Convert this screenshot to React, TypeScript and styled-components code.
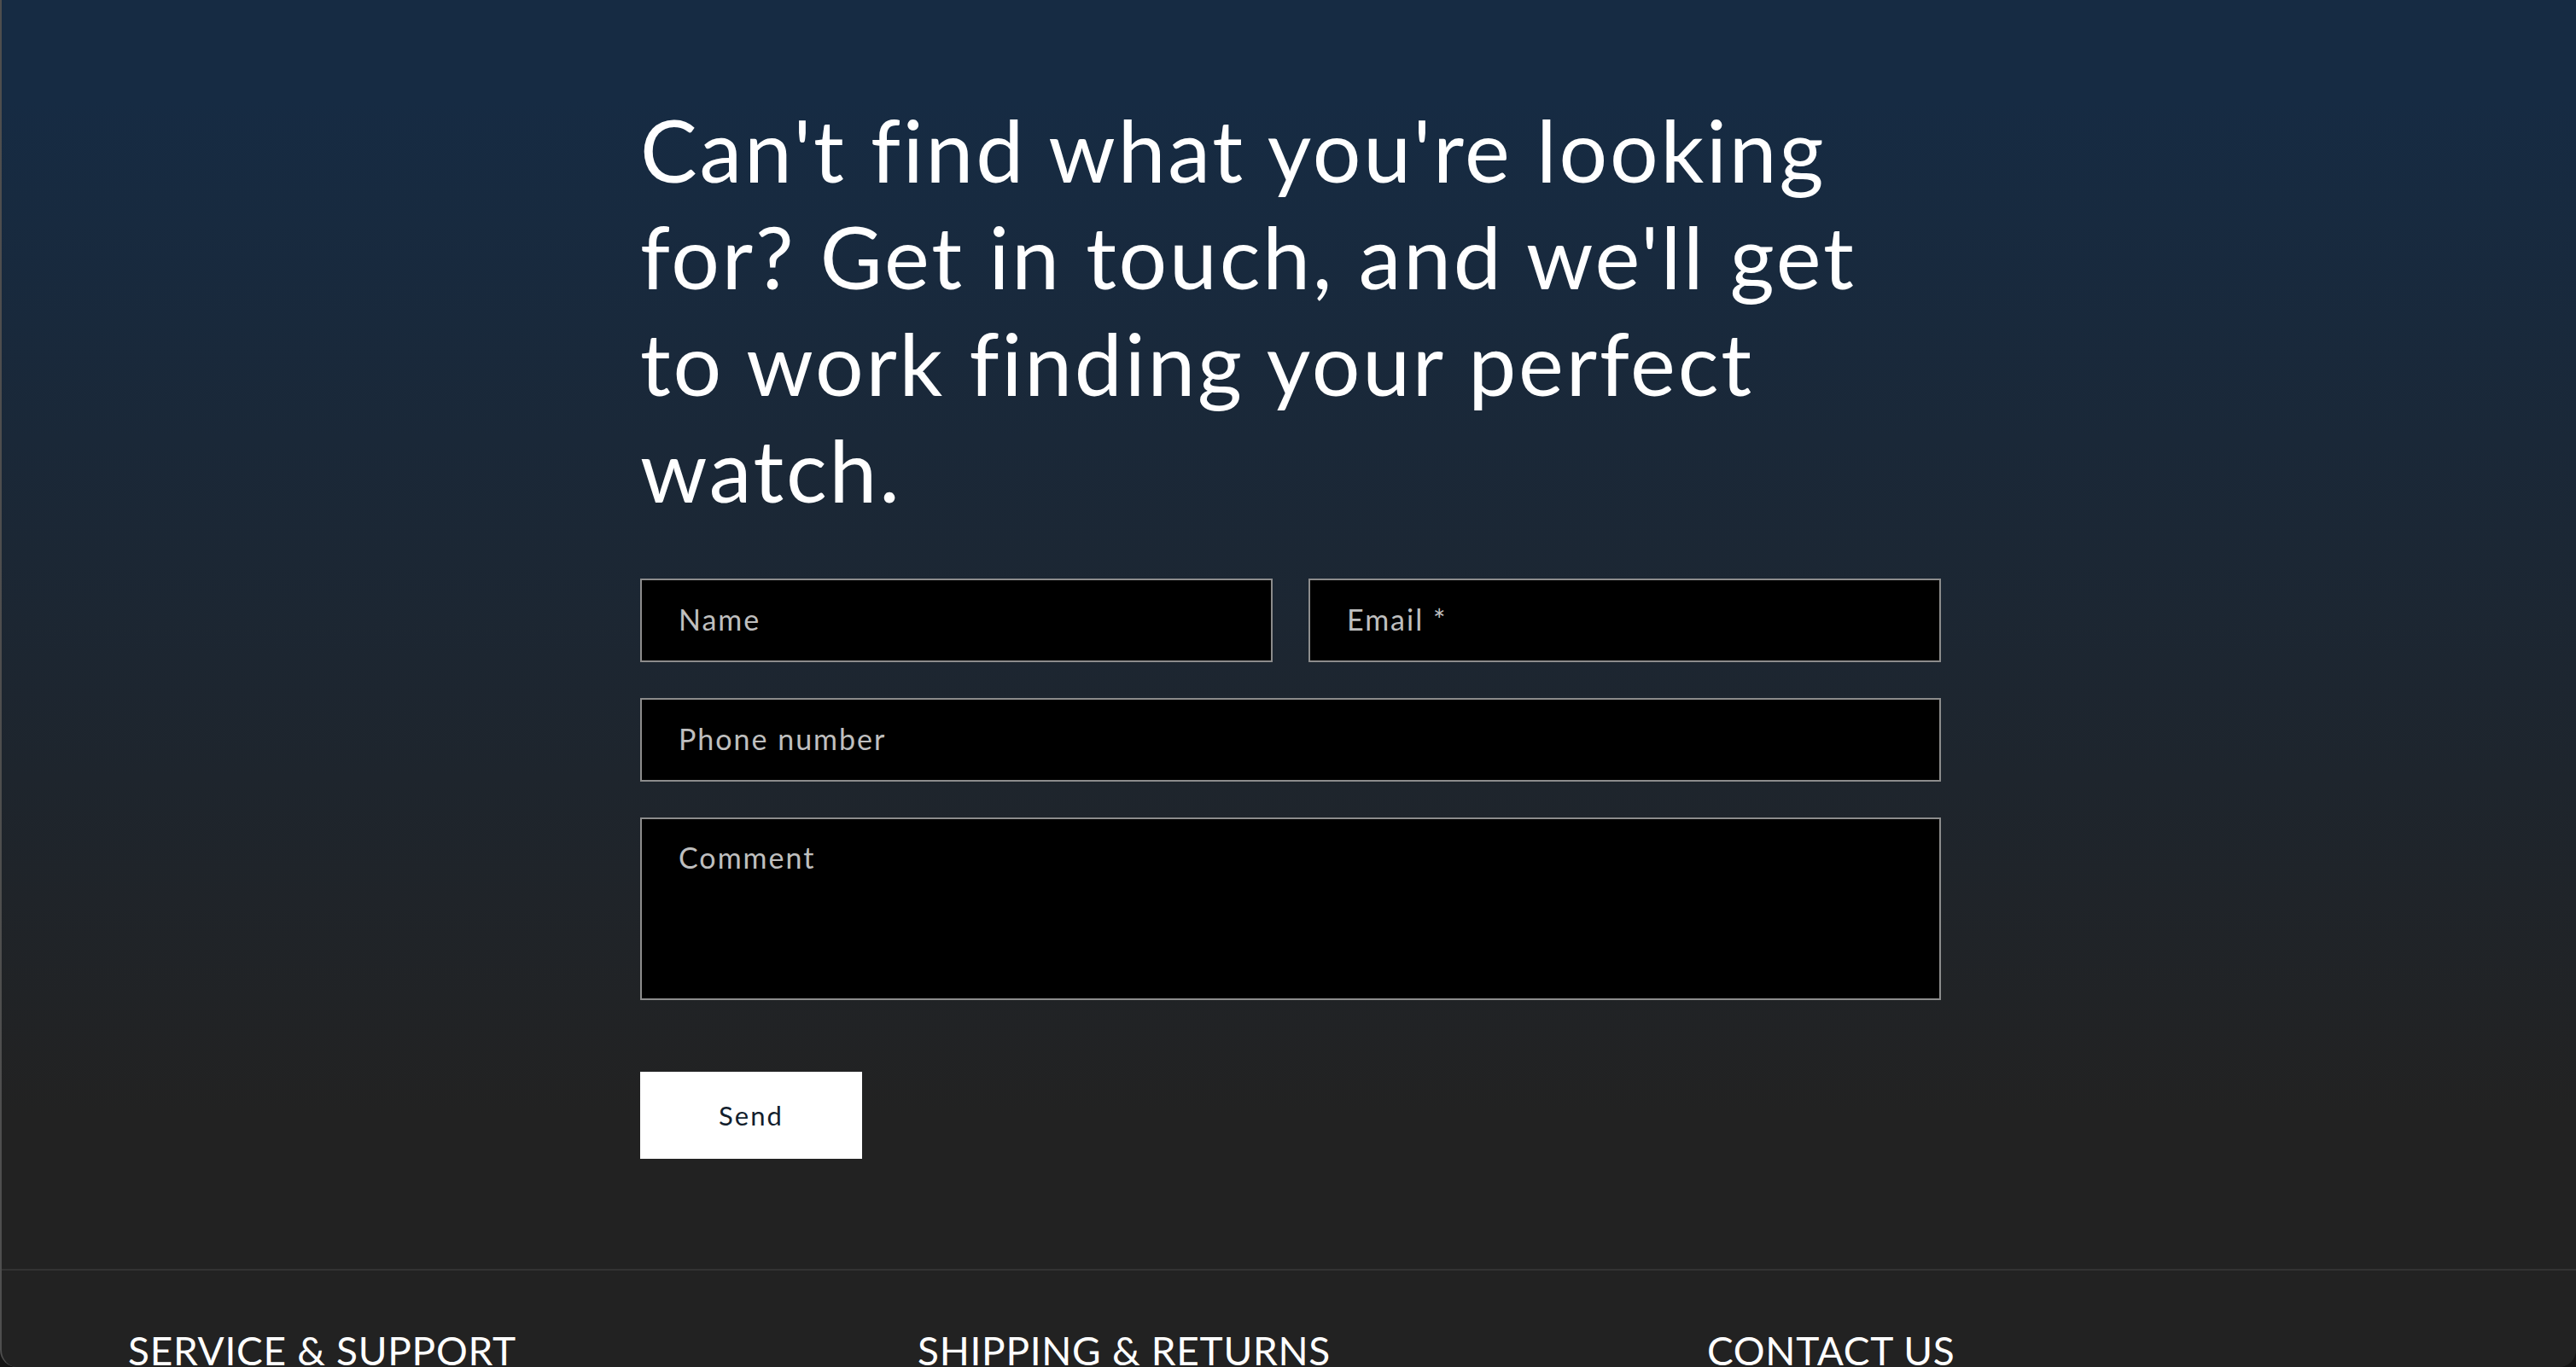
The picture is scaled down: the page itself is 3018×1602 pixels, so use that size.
import React from "react";
import styled, { createGlobalStyle } from "styled-components";

const GlobalStyle = createGlobalStyle`
  html, body {
    margin: 0;
    padding: 0;
    background: #141414;
  }
  * {
    box-sizing: border-box;
  }
`;

const Frame = styled.div`
  height: 100vh;
  overflow: hidden;
  border-left: 2px solid rgba(255, 255, 255, 0.2);
  border-radius: 0 0 20px 20px;
  background-color: #222222;
  font-family: Lato, "Open Sans", sans-serif;
`;

const ContactSection = styled.section`
  background: linear-gradient(180deg, #162b43 8%, #222222 88%);
  padding: 113px 0 129px 748px;
`;

const Inner = styled.div`
  width: 1524px;
`;

const Heading = styled.h2`
  max-width: 1470px;
  margin: 0 0 65px;
  font-size: 100px;
  line-height: 125px;
  font-weight: 400;
  color: #ffffff;
  letter-spacing: 2.8px;
`;

const Form = styled.form`
  display: grid;
  grid-template-columns: 1fr 1fr;
  column-gap: 42px;
  row-gap: 42px;
`;

const fieldBase = `
  display: block;
  width: 100%;
  margin: 0;
  border: 2px solid rgba(255, 255, 255, 0.55);
  border-radius: 0;
  background: #000000;
  color: #ffffff;
  font-family: Lato, "Open Sans", sans-serif;
  font-size: 34px;
  line-height: 40px;
  letter-spacing: 2px;
  padding: 25px 43px 29px;
  outline: none;
  &::placeholder {
    color: rgba(255, 255, 255, 0.75);
    opacity: 1;
  }
`;

const Input = styled.input<{ $wide?: boolean }>`
  ${fieldBase}
  height: 98px;
  grid-column: ${({ $wide }) => ($wide ? "1 / -1" : "auto")};
`;

const TextArea = styled.textarea`
  ${fieldBase}
  height: 214px;
  grid-column: 1 / -1;
  resize: none;
`;

const Actions = styled.div`
  grid-column: 1 / -1;
  padding-top: 42px;
`;

const SendButton = styled.button`
  width: 260px;
  height: 102px;
  border: none;
  border-radius: 0;
  background: #ffffff;
  color: #121e2d;
  font-family: Lato, "Open Sans", sans-serif;
  font-size: 31px;
  letter-spacing: 2px;
  cursor: pointer;
`;

const Footer = styled.footer`
  border-top: 2px solid #333333;
  padding: 71px 0 0 148px;
  display: grid;
  grid-template-columns: repeat(3, 925px);
`;

const FooterTitle = styled.h3`
  margin: 0;
  font-size: 46px;
  line-height: 46px;
  font-weight: 400;
  text-transform: uppercase;
  color: #ffffff;
  letter-spacing: 0.7px;
`;

const footerColumns = ["Service & Support", "Shipping & Returns", "Contact us"];

export default function App() {
  return (
    <>
      <GlobalStyle />
      <Frame>
        <ContactSection>
          <Inner>
            <Heading>
              Can't find what you're looking for? Get in touch, and we'll get
              to work finding your perfect watch.
            </Heading>
            <Form onSubmit={(e) => e.preventDefault()}>
              <Input type="text" placeholder="Name" />
              <Input type="email" placeholder="Email *" />
              <Input $wide type="tel" placeholder="Phone number" />
              <TextArea placeholder="Comment" />
              <Actions>
                <SendButton type="submit">Send</SendButton>
              </Actions>
            </Form>
          </Inner>
        </ContactSection>
        <Footer>
          {footerColumns.map((title) => (
            <FooterTitle key={title}>{title}</FooterTitle>
          ))}
        </Footer>
      </Frame>
    </>
  );
}
